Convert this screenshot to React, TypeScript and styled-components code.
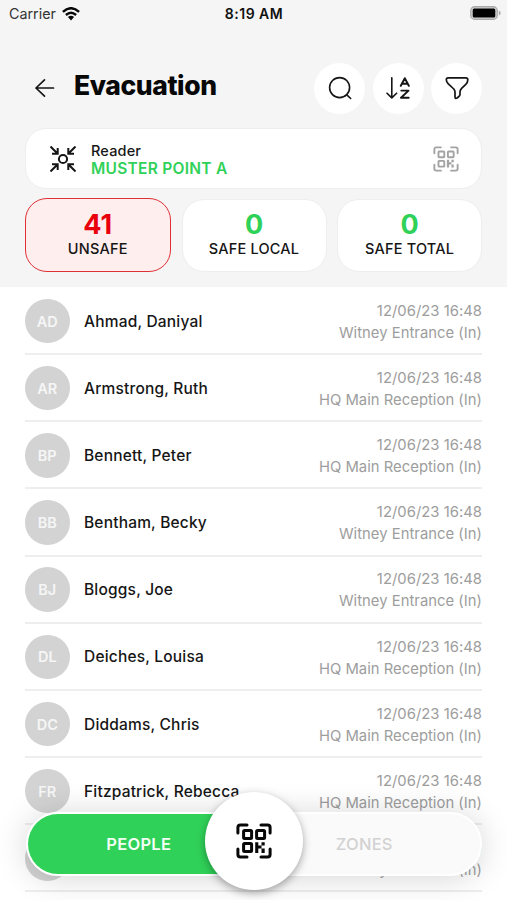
import React from "react";
import styled, { createGlobalStyle } from "styled-components";

const GlobalStyle = createGlobalStyle`
  * { box-sizing: border-box; }
  body {
    margin: 0;
    background: #fff;
    color: #161616;
    font-family: Inter, "Liberation Sans", sans-serif;
    overflow: hidden;
  }
  button { font: inherit; color: inherit; border: 0; padding: 0; background: none; }
  svg { display: block; flex: none; }
`;

const Screen = styled.main`
  position: relative;
  width: 507px;
  height: 900px;
  overflow: hidden;
  background: #fff;
`;

const Header = styled.header`
  height: 287px;
  background: #f5f5f5;
`;

const StatusBar = styled.div`
  display: grid;
  grid-template-columns: 1fr auto 1fr;
  align-items: center;
  height: 28px;
  padding: 0 6px 0 9px;
`;

const Carrier = styled.div`
  display: flex;
  align-items: center;
  gap: 6px;
  margin-top: -1px;
  font-size: 14.3px;
  color: #333;
`;

const Clock = styled.div`
  margin: -2px 2px 0 0;
  font-size: 14px;
  font-weight: 600;
  letter-spacing: 0.5px;
  color: #111;
`;

const BatterySlot = styled.div`
  display: flex;
  justify-content: flex-end;
  padding-bottom: 2px;
`;

const TitleBar = styled.div`
  display: flex;
  align-items: center;
  height: 50px;
  margin: 35px 25px 0 34px;
`;

const BackButton = styled.button`
  width: 40px;
`;

const Title = styled.h1`
  flex: 1;
  margin: 0 0 6px;
  font-size: 26.5px;
  font-weight: 800;
  letter-spacing: -0.42px;
  color: #080808;
`;

const Tools = styled.div`
  display: flex;
  gap: 7.5px;
`;

const RoundButton = styled.button`
  display: flex;
  align-items: center;
  justify-content: center;
  width: 51px;
  height: 51px;
  border-radius: 50%;
  background: #fff;
`;

const ReaderCard = styled.section`
  display: flex;
  align-items: center;
  height: 61px;
  margin: 15px 25px 0;
  padding: 0 22px 0 24px;
  border: 1px solid #eee;
  border-radius: 21px;
  background: #fff;
`;

const ReaderText = styled.div`
  flex: 1;
  margin-left: 15px;
  padding-top: 3px;
  line-height: 18.5px;
`;

const ReaderLabel = styled.div`
  font-size: 14.5px;
  font-weight: 500;
  letter-spacing: 0.15px;
`;

const ReaderName = styled.div`
  font-size: 15.5px;
  font-weight: 600;
  letter-spacing: 0.27px;
  color: #30d158;
`;

const Stats = styled.section`
  display: grid;
  grid-template-columns: 146.5px 145px 145px;
  justify-content: space-between;
  height: 74px;
  margin: 9px 25px 0 24.5px;
`;

const StatCard = styled.div<{ $danger?: boolean }>`
  display: flex;
  flex-direction: column;
  align-items: center;
  margin: ${(p) => (p.$danger ? "0" : "0.5px 0")};
  padding-top: ${(p) => (p.$danger ? "9px" : "8.5px")};
  border: ${(p) => (p.$danger ? "1.5px solid #df3036" : "1px solid #eee")};
  border-radius: 22px;
  background: ${(p) => (p.$danger ? "#ffeeee" : "#fff")};
`;

const StatValue = styled.div<{ $danger?: boolean }>`
  font-size: 27px;
  line-height: 34px;
  font-weight: 700;
  color: ${(p) => (p.$danger ? "#e8000b" : "#30d158")};
`;

const StatLabel = styled.div`
  margin-top: -1px;
  font-size: 14.5px;
  line-height: 16px;
  font-weight: 500;
  letter-spacing: 0.2px;
`;

const List = styled.ul`
  margin: 0;
  padding: 1px 25px 0;
  list-style: none;
`;

const Row = styled.li`
  display: flex;
  align-items: center;
  height: 67.17px;
  border-bottom: 2px solid #eeeeee;
`;

const Avatar = styled.div`
  display: flex;
  align-items: center;
  justify-content: center;
  width: 44.5px;
  height: 44.5px;
  margin-top: 1px;
  border-radius: 50%;
  background: #d3d3d3;
  color: #f6f6f6;
  font-size: 14.5px;
  font-weight: 600;
`;

const Name = styled.div`
  flex: 1;
  margin: 1px 0 0 14.5px;
  font-size: 15.5px;
  font-weight: 500;
  letter-spacing: 0.19px;
`;

const Visit = styled.div`
  margin-top: 2.5px;
  text-align: right;
  font-size: 14.8px;
  line-height: 22px;
  letter-spacing: 0.03px;
  color: #9d9d9d;
`;

const BottomNav = styled.nav`
  position: absolute;
  left: 26px;
  top: 812px;
  display: flex;
  width: 456px;
  height: 64px;
  border: 2px solid #fff;
  border-radius: 32px;
  background: #fafafa;
  box-shadow: 0 2px 32px rgba(0, 0, 0, 0.17);
`;

const Tab = styled.button<{ $active?: boolean }>`
  flex: 1;
  padding: ${(p) => (p.$active ? "0 4px 0 0" : "0 5px 0 0")};
  border-radius: ${(p) => (p.$active ? "30px 0 0 30px" : "0 30px 30px 0")};
  background: ${(p) => (p.$active ? "#30d158" : "transparent")};
  color: ${(p) => (p.$active ? "#f2fff5" : "#d2d2d2")};
  font-size: 16.5px;
  font-weight: ${(p) => (p.$active ? 600 : 500)};
  letter-spacing: 0.25px;
`;

const ScanButton = styled.button`
  position: absolute;
  left: 205px;
  top: 792px;
  display: flex;
  align-items: center;
  justify-content: center;
  width: 98px;
  height: 98px;
  border-radius: 50%;
  background: #fff;
  box-shadow: 0 3px 9px rgba(0, 0, 0, 0.34);
`;

function QrIcon({ size, color, weight = 3 }: { size: number; color: string; weight?: number }) {
  return (
    <svg width={size} height={size} viewBox="0 0 36 36" fill="none" stroke={color} strokeWidth={weight} strokeLinecap="round" strokeLinejoin="round">
      <path d="M1.9 10V4.4Q1.9 1.9 4.4 1.9H11M25 1.9H31.6Q34.1 1.9 34.1 4.4V10M1.9 26V31.6Q1.9 34.1 4.4 34.1H11M25 34.1H31.6Q34.1 34.1 34.1 31.6V26" />
      <rect x="7.6" y="7.6" width="8" height="8" rx="1" />
      <rect x="20.6" y="7.6" width="8" height="8" rx="1" />
      <rect x="7.6" y="20.6" width="8" height="8" rx="1" />
      <path d="M19.2 19.2h3.1v3.4h3.2v3h-3.2v4.3h-3.1zM25.5 19.2h3.2v3.4h-3.2zM25.5 25.6h3.2v4.3h-3.2z" fill={color} stroke="none" />
    </svg>
  );
}

function WifiIcon() {
  return (
    <svg width="18" height="14" viewBox="0 0 18 14" fill="none" stroke="#080808" strokeWidth="2.4">
      <path d="M.9 4.8Q9-2.4 17.1 4.8M3.9 8Q9 3.5 14.1 8" />
      <path d="M5.9 10Q9 7.4 12.1 10L9 13.5Z" fill="#080808" stroke="none" />
    </svg>
  );
}

function BatteryIcon() {
  return (
    <svg width="31" height="14" viewBox="0 0 31 14">
      <rect x=".8" y=".8" width="26.4" height="12.4" rx="3.8" fill="#d8d8d8" stroke="#aaa" strokeWidth="1.4" />
      <rect x="2.7" y="2.5" width="22.6" height="9" rx="1.5" fill="#000" />
      <path d="M28.8 4.5Q30.7 5.4 30.7 7T28.8 9.5Z" fill="#aaa" />
    </svg>
  );
}

function BackIcon() {
  return (
    <svg width="21" height="20" viewBox="0 0 21 20" fill="none" stroke="#151515" strokeWidth="1.7" strokeLinecap="round" strokeLinejoin="round">
      <path d="M19.5 10H2M10.5 1.8 2 10l8.5 8.2" />
    </svg>
  );
}

function SearchIcon() {
  return (
    <svg width="24" height="24" viewBox="0 0 24 24" fill="none" stroke="#151515" strokeWidth="1.6" strokeLinecap="round">
      <circle cx="11.6" cy="11.6" r="10" />
      <path d="m18.8 18.8 3.9 3.7" />
    </svg>
  );
}

function SortIcon() {
  return (
    <svg width="24" height="24" viewBox="0 0 24 24" fill="none" stroke="#151515" strokeWidth="1.6" strokeLinecap="round" strokeLinejoin="round">
      <path d="M5.8 1.8v20M1 17.2l4.8 4.7 4.8-4.7" />
      <path d="m14.8 9.8 4-7.6 4 7.6M16.1 7.7h5.4M15.3 14.6h7.2L15 21.8h7.7" strokeWidth="1.9" />
    </svg>
  );
}

function FilterIcon() {
  return (
    <svg width="24" height="24" viewBox="0 0 24 24" fill="none" stroke="#151515" strokeWidth="1.7" strokeLinejoin="round">
      <path d="M3.2 1.8h17.6q2 0 2 2 0 2.8-2 4.5l-4.2 4Q15 14 15 16v2.5q0 1.3-1.2 2l-1.8 1.6q-2 1-2-1.4V16q0-1.5-1.2-3L3.3 7.9Q1.3 5.8 1.3 3.8q0-2 1.9-2Z" />
    </svg>
  );
}

function MusterIcon() {
  return (
    <svg width="26" height="26" viewBox="0 0 26 26" fill="none" stroke="#151515" strokeWidth="2">
      <circle cx="13" cy="13" r="4.1" />
      <path d="m.5.5 7 7M7.7 2V7.7H2M25.5.5l-7 7M18.3 2V7.7h5.7M.5 25.5l7-7M2 18.3H7.7v5.7M25.5 25.5l-7-7M24 18.3H18.3v5.7" />
    </svg>
  );
}

const WITNEY = "Witney Entrance (In)";
const HQ = "HQ Main Reception (In)";

const people = [
  { initials: "AD", name: "Ahmad, Daniyal", place: WITNEY },
  { initials: "AR", name: "Armstrong, Ruth", place: HQ },
  { initials: "BP", name: "Bennett, Peter", place: HQ },
  { initials: "BB", name: "Bentham, Becky", place: WITNEY },
  { initials: "BJ", name: "Bloggs, Joe", place: WITNEY },
  { initials: "DL", name: "Deiches, Louisa", place: HQ },
  { initials: "DC", name: "Diddams, Chris", place: HQ },
  { initials: "FR", name: "Fitzpatrick, Rebecca", place: HQ },
  { initials: "", name: "", place: WITNEY },
];

export default function App() {
  return (
    <Screen>
      <GlobalStyle />
      <Header>
        <StatusBar>
          <Carrier>Carrier <WifiIcon /></Carrier>
          <Clock>8:19 AM</Clock>
          <BatterySlot><BatteryIcon /></BatterySlot>
        </StatusBar>
        <TitleBar>
          <BackButton aria-label="Back"><BackIcon /></BackButton>
          <Title>Evacuation</Title>
          <Tools>
            <RoundButton aria-label="Search"><SearchIcon /></RoundButton>
            <RoundButton aria-label="Sort"><SortIcon /></RoundButton>
            <RoundButton aria-label="Filter"><FilterIcon /></RoundButton>
          </Tools>
        </TitleBar>
        <ReaderCard>
          <MusterIcon />
          <ReaderText>
            <ReaderLabel>Reader</ReaderLabel>
            <ReaderName>MUSTER POINT A</ReaderName>
          </ReaderText>
          <QrIcon size={26} color="#a3a3a3" weight={2.6} />
        </ReaderCard>
        <Stats>
          <StatCard $danger><StatValue $danger>41</StatValue><StatLabel>UNSAFE</StatLabel></StatCard>
          <StatCard><StatValue>0</StatValue><StatLabel>SAFE LOCAL</StatLabel></StatCard>
          <StatCard><StatValue>0</StatValue><StatLabel>SAFE TOTAL</StatLabel></StatCard>
        </Stats>
      </Header>
      <List>
        {people.map((p, i) => (
          <Row key={i}>
            <Avatar>{p.initials}</Avatar>
            <Name>{p.name}</Name>
            <Visit>12/06/23 16:48<br />{p.place}</Visit>
          </Row>
        ))}
      </List>
      <BottomNav>
        <Tab $active>PEOPLE</Tab>
        <Tab>ZONES</Tab>
      </BottomNav>
      <ScanButton aria-label="Scan code"><QrIcon size={36} color="#080808" /></ScanButton>
    </Screen>
  );
}
